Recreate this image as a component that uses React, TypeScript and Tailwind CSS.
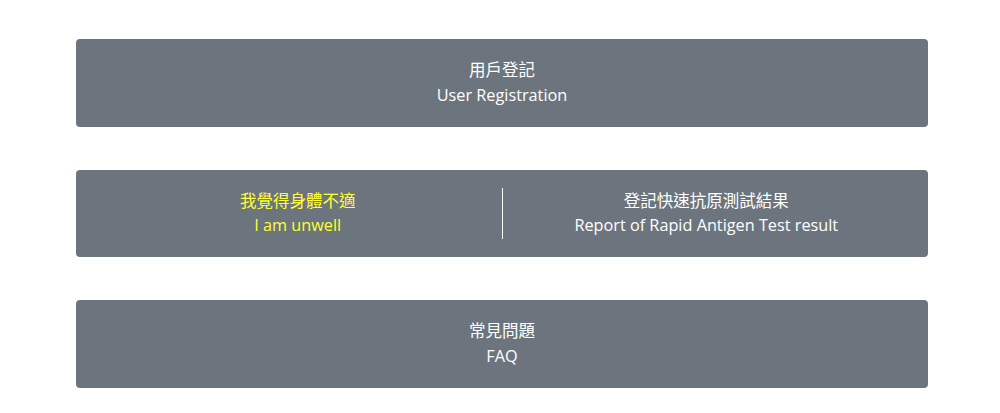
export default function App() {
  const font = { fontFamily: '"Open Sans", "Noto Sans CJK TC", sans-serif' };
  return (
    <div className="min-h-screen bg-white pt-[39px]" style={font}>
      <div className="ml-[76px] w-[852px] flex flex-col gap-[43px] text-[16.25px] leading-[25.75px] text-white">
        <div className="bg-[#6c757d] rounded-[4px] p-[18px] text-center">
          <div className="text-[16.5px]">用戶登記</div>
          <div>User Registration</div>
        </div>

        <div className="bg-[#6c757d] rounded-[4px] p-[18px] flex">
          <div className="flex-1 text-center text-[#ffff33]">
            <div className="text-[16.5px]">我覺得身體不適</div>
            <div>I am unwell</div>
          </div>
          <div className="w-px bg-white" />
          <div className="flex-1 text-center">
            <div className="text-[16.5px]">登記快速抗原測試結果</div>
            <div>Report of Rapid Antigen Test result</div>
          </div>
        </div>

        <div className="bg-[#6c757d] rounded-[4px] p-[18px] text-center">
          <div className="text-[16.5px]">常見問題</div>
          <div>FAQ</div>
        </div>
      </div>
    </div>
  );
}
